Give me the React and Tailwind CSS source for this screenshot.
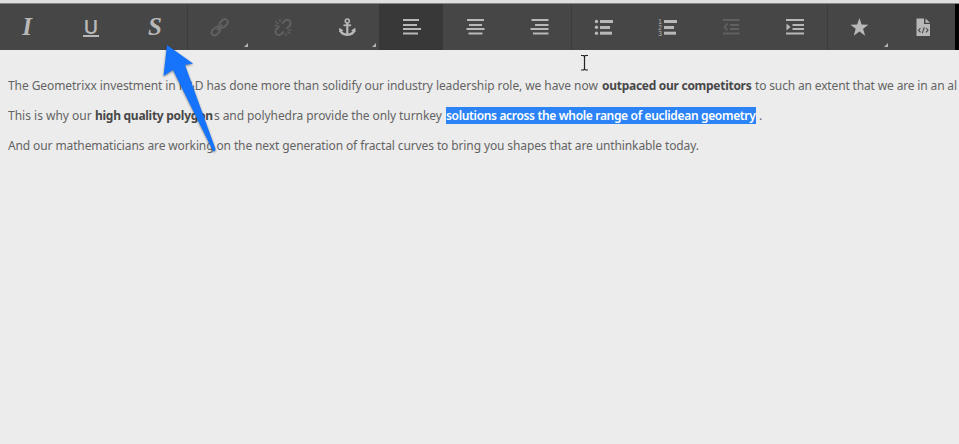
import React from "react";

const Bars = ({ rows }) => (
  <g fill="currentColor">
    {rows.map(([x, y, w, h = 2]) => (
      <rect key={`${x}-${y}`} x={x} y={y} width={w} height={h} />
    ))}
  </g>
);

const Glyph = ({ children }) => (
  <svg viewBox="0 0 64 46" className="block h-[46px] w-16 shrink-0">
    {children}
  </svg>
);

const Corner = () => <path d="M61 39V43H57Z" fill="#b4b4b4" />;

const Link = () => (
  <g fill="none" stroke="currentColor" strokeWidth="2" transform="rotate(-45 32.500 23.500)">
    <rect x="22.500" y="20.500" width="9.500" height="6" rx="3" />
    <rect x="33.500" y="20.500" width="9.500" height="6" rx="3" />
    <path d="M29 23.500H36.500" />
  </g>
);

const Unlink = () => (
  <g fill="none" stroke="currentColor" strokeWidth="2">
    <path d="M31 19.500l2.600-2.600a3.400 3.400 0 0 1 5 4.800l-3 3" />
    <path d="M28.500 22l-3 3a3.400 3.400 0 0 0 4.800 5l2.500-2.500" />
    <path d="M24.500 17.500l3 2.500M29 15v3M23.500 21.500h3M39.500 30l-3-2.500M35 32v-3M40.500 26h-3" strokeWidth="1.300" />
  </g>
);

const Anchor = () => (
  <g fill="none" stroke="currentColor">
    <circle cx="32.300" cy="17" r="2" strokeWidth="1.600" />
    <path d="M32.300 19v12" strokeWidth="2.200" />
    <path d="M28.500 21.300h7.600" strokeWidth="1.800" />
    <path d="M25.300 26c.9 3.400 3.600 4.700 7 4.700s6.100-1.300 7-4.700" strokeWidth="2.600" />
    <path d="M24 28l.3-4.300 4.300 2.800zM40.600 28l-.3-4.300-4.300 2.800z" fill="currentColor" stroke="none" />
  </g>
);

const tools = [
  { id: "italic", letter: "I" },
  { id: "underline", letter: "U" },
  { id: "strike", letter: "S" },
  { id: "link", divider: true, off: true, corner: true, icon: <Link /> },
  { id: "unlink", off: true, icon: <Unlink /> },
  { id: "anchor", corner: true, icon: <Anchor /> },
  { id: "left", active: true, icon: <Bars rows={[[24, 15, 16], [24, 20, 14], [24, 24, 18], [24, 28.5, 15]]} /> },
  { id: "center", icon: <Bars rows={[[24, 15, 17], [26, 20, 13], [23.5, 24, 18], [25.5, 28.5, 14]]} /> },
  { id: "right", icon: <Bars rows={[[24.5, 15, 17], [28, 20, 13.5], [23.5, 24, 18], [26, 28.5, 15.5]]} /> },
  {
    id: "bullets",
    divider: true,
    icon: (
      <g fill="currentColor">
        <circle cx="25.500" cy="17.500" r="1.700" /><circle cx="25.500" cy="23.300" r="1.700" /><circle cx="25.500" cy="29.200" r="1.700" />
        <Bars rows={[[29, 16, 13, 3], [29, 22, 10, 3], [29, 27.7, 12, 3]]} />
      </g>
    ),
  },
  {
    id: "numbers",
    icon: (
      <g fill="currentColor" fontFamily="Liberation Sans, sans-serif" fontSize="6.500" fontWeight="400">
        <text x="23.300" y="19.600">1</text><text x="23.300" y="25.600">2</text><text x="23.300" y="31.600">3</text>
        <Bars rows={[[29, 16, 13, 3], [29, 22, 10, 3], [29, 27.7, 12, 3]]} />
      </g>
    ),
  },
  { id: "outdent", off: true, icon: <g><Bars rows={[[24, 15, 16.5], [31, 20, 9], [31, 24, 9], [24, 28.5, 16.5]]} /><path d="M28.500 19.500L25.500 23l3 3.500" fill="none" stroke="currentColor" strokeWidth="1.800" /></g> },
  { id: "indent", icon: <g><Bars rows={[[23, 15, 18], [29.5, 20, 11.5], [29.5, 24, 11.5], [23, 28.5, 18]]} /><path d="M23.500 19.500V26.500L27.500 23Z" fill="currentColor" /></g> },
  { id: "star", divider: true, corner: true, icon: <path d="M32.400 14l2.200 6.600 6.800.1-5.300 4 2 7-5.700-4.100-5.700 4.100 2-7-5.300-4 6.800-.1z" fill="currentColor" /> },
  {
    id: "source",
    icon: (
      <g>
        <path d="M25.500 14.500H33V20H39V32H25.500ZM34.500 14.500L39 18.800H34.500Z" fill="currentColor" />
        <path d="M29.500 24l-2 2.200 2 2.200M35 24l2 2.200-2 2.200M33.300 23.300l-2 5.800" fill="none" stroke="#484848" strokeWidth="1.100" />
      </g>
    ),
  },
];

function Tool({ t }) {
  return (
    <button
      className={`flex h-[46px] w-16 shrink-0 items-center justify-center ${t.divider ? "shadow-[inset_1px_0_#3b3b3b]" : ""} ${t.active ? "bg-[#383838]" : ""} ${t.off ? "text-[#606060]" : "text-[#b8b8b8]"}`}
    >
      {t.letter === "U" ? (
        <span className="block w-4 border-b-2 border-current text-center font-['Open_Sans',sans-serif] text-[20px] leading-[17px] font-semibold">U</span>
      ) : t.letter ? (
        <span className="block text-center font-['Liberation_Serif',serif] text-[25px] leading-[46px] font-bold italic">{t.letter}</span>
      ) : (
        <Glyph>
          {t.icon}
          {t.corner && <Corner />}
        </Glyph>
      )}
    </button>
  );
}

const Seg = ({ className = "", children }) => (
  <span className={`block shrink-0 whitespace-pre ${className}`}>{children}</span>
);

export default function App() {
  return (
    <div className="relative h-[444px] w-[959px] overflow-hidden bg-[#ececec] font-['Noto_Sans',sans-serif] text-[12px] text-[#646464]">
      <div className="h-[3px] bg-[#dfdfdf]" />
      <div className="h-px bg-[#858585]" />
      <div className="flex h-[46px] w-[959px] overflow-hidden bg-[#464646]">
        <div className="-ml-[5px] flex shrink-0">
          {tools.map((t) => <Tool key={t.id} t={t} />)}
        </div>
        <div className="h-full w-1 shrink-0 bg-black" />
      </div>
      <div className="flex flex-col gap-[13px] pt-[27px] pl-2 leading-[17px]">
        <div className="flex">
          <Seg className="w-[594px] tracking-[-0.075px]">The Geometrixx investment in R&D has done more than solidify our industry leadership role, we have now</Seg>
          <Seg className="w-[153px] font-bold tracking-[-0.28px] text-[#484848]">outpaced our competitors</Seg>
          <Seg className="tracking-[-0.15px]">to such an extent that we are in an al</Seg>
        </div>
        <div className="flex">
          <Seg className="w-[87px]">This is why our</Seg>
          <Seg className="w-[119px] font-bold tracking-[-0.27px] text-[#484848]">high quality polygon</Seg>
          <Seg className="w-[232px] tracking-[-0.08px]">s and polyhedra provide the only turnkey</Seg>
          <Seg className="w-[310px] bg-[#2b83f6] font-semibold tracking-[-0.335px] text-white">solutions across the whole range of euclidean geometry</Seg>
          <Seg className="pl-[3px]">.</Seg>
        </div>
        <div className="flex">
          <Seg className="tracking-[-0.115px]">And our mathematicians are working on the next generation of fractal curves to bring you shapes that are unthinkable today.</Seg>
        </div>
      </div>
      <svg className="absolute top-[54px] left-[579px] h-[18px] w-3" viewBox="0 0 12 18" fill="none" stroke="#222" strokeWidth="1.200">
        <path d="M2 1.500H4.500L5.500 2.500L6.500 1.500H9M2 16H4.500L5.500 15L6.500 16H9M5.500 2.500V15" />
      </svg>
      <svg className="absolute top-[40px] left-[155px] h-[120px] w-[70px] drop-shadow-[0_1px_1px_rgba(0,0,0,0.45)]" viewBox="155 40 70 120">
        <path d="M167 45L193 63.500L185 65L215.500 149Q215.500 152 213 151L173 70L163.500 76Z" fill="#1673fb" />
      </svg>
    </div>
  );
}
